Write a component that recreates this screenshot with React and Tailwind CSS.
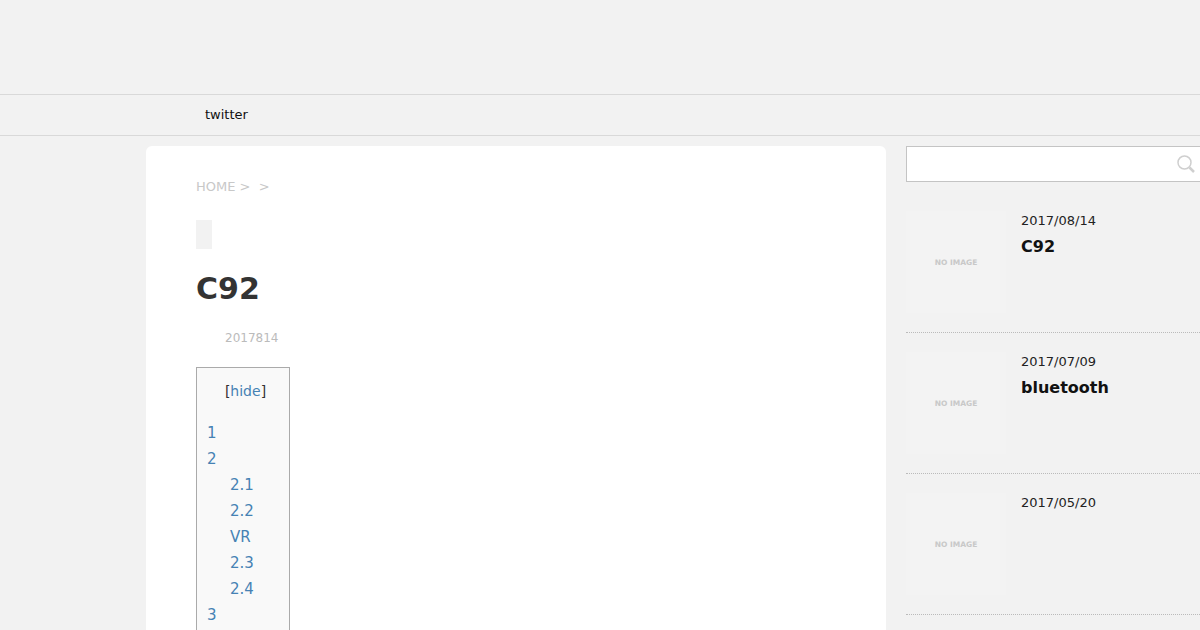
import React from 'react'

const posts = [
  { date: '2017/08/14', title: 'C92' },
  { date: '2017/07/09', title: 'bluetooth' },
  { date: '2017/05/20', title: '' },
]

const toc = [
  { label: '1' },
  { label: '2' },
  { label: '2.1', sub: true },
  { label: '2.2', sub: true },
  { label: 'VR', sub: true },
  { label: '2.3', sub: true },
  { label: '2.4', sub: true },
  { label: '3' },
]

function App() {
  return (
    <div className="h-[630px] w-[1200px] overflow-hidden bg-[#f2f2f2] font-['DejaVu_Sans',sans-serif]">
      {/* HEADER */}
      <header className="h-[95px] border-b border-[#d9d9d9]"></header>

      {/* NAV */}
      <nav className="h-[41px] border-b border-[#d9d9d9] pl-[205px] text-[13px] leading-[39px] text-[#111]">
        twitter
      </nav>

      <div className="flex items-start gap-5 pt-[10px] pl-[146px]">
        {/* ARTICLE */}
        <main className="h-[600px] w-[740px] shrink-0 rounded-md bg-white px-[50px] pt-[32px]">
          <div className="text-[13px] leading-[17px] text-[#c8c8c8]">HOME &gt; &nbsp;&gt;</div>
          <div className="mt-[25px] h-[29px] w-4 bg-[#f2f2f2]"></div>
          <h1 className="mt-[21px] text-[30px] leading-[38px] font-bold text-[#333]">C92</h1>
          <div className="mt-[22px] pl-[29px] text-[12px] leading-[16px] text-[#bbb]">2017814</div>

          <div className="mt-[21px] h-[400px] w-[94px] border border-[#aaa] bg-[#f9f9f9] px-[10px] pt-[13px] text-[#4682b4]">
            <div className="pl-[5px] text-center text-[14px] leading-[20px] text-[#333]">
              [<span className="text-[#4682b4]">hide</span>]
            </div>
            <ul className="mt-[19px] text-[15px] leading-[26px]">
              {toc.map((item, i) => (
                <li key={i} className={item.sub ? 'pl-[23px]' : ''}>{item.label}</li>
              ))}
            </ul>
          </div>
        </main>

        {/* SIDEBAR */}
        <aside className="w-[340px] shrink-0">
          <div className="flex h-9 items-center justify-end border border-[#c4c4c4] bg-white pr-[44px]">
            <svg width="20" height="20" viewBox="0 0 20 20" fill="none" stroke="#cfcfcf" className="mr-[5px]">
              <circle cx="8.5" cy="8.5" r="6.5" strokeWidth="1.5" />
              <path d="M13.5 13.5 L18 18" strokeWidth="2.5" />
            </svg>
          </div>
          <div className="mt-[29px]">
            {posts.map((post, i) => (
              <div key={i} className="mb-[19px] flex h-[122px] gap-[15px] border-b border-dotted border-[#bbb]">
                <div className="flex h-[102px] w-[100px] items-center justify-center bg-[#f3f3f3] pt-[2px] text-[7.5px] font-bold text-[#c8c8c8]">
                  NO IMAGE
                </div>
                <div>
                  <div className="mt-[1px] text-[13px] leading-[17px] text-[#222]">{post.date}</div>
                  <div className="mt-[6px] text-[16px] leading-[24px] font-bold text-[#111]">{post.title}</div>
                </div>
              </div>
            ))}
          </div>
        </aside>
      </div>
    </div>
  )
}

export default App
